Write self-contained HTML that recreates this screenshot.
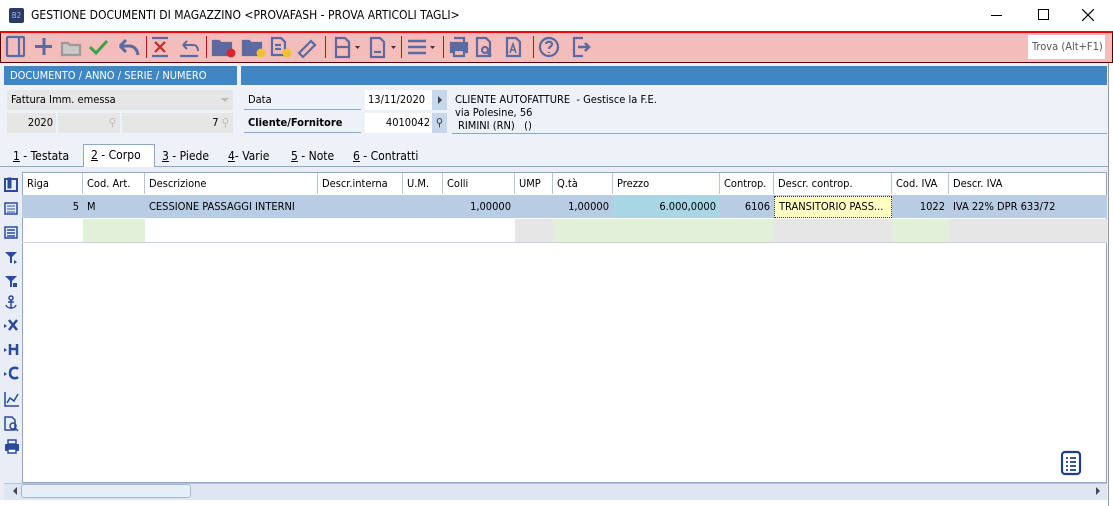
<!DOCTYPE html>
<html><head><meta charset="utf-8"><style>
*{margin:0;padding:0;box-sizing:border-box}
body{width:1113px;height:506px;overflow:hidden;background:#fff;font-family:Tahoma,"DejaVu Sans Condensed","Liberation Sans",sans-serif;font-size:11px;color:#000;position:relative}
.a{position:absolute}
.t{font-family:"DejaVu Sans Condensed","Liberation Sans",sans-serif;font-size:11px;white-space:nowrap}
.ico{position:absolute;top:35px}
.sep{position:absolute;top:36px;width:1px;height:22px;background:#b01818}
.cell{position:absolute;border-right:1px solid #b7c3d6;padding:0 4px;line-height:21px;overflow:hidden;white-space:nowrap}
</style></head><body>
<!-- title bar -->
<div class="a" style="left:9px;top:8px;width:15px;height:15px;background:#2c3a66;border-radius:2px;color:#9fb4e8;font-size:8px;line-height:15px;text-align:center">B2</div>
<div class="a t" style="left:31px;top:8px;font-size:12px">GESTIONE DOCUMENTI DI MAGAZZINO &lt;PROVAFASH - PROVA ARTICOLI TAGLI&gt;</div>
<div class="a" style="left:991px;top:15px;width:11px;height:1px;background:#000"></div>
<div class="a" style="left:1038px;top:9px;width:11px;height:11px;border:1px solid #000"></div>
<svg class="a" style="left:1082px;top:9px" width="12" height="12"><path d="M0 0L12 12M12 0L0 12" stroke="#000" stroke-width="1.2"/></svg>
<!-- toolbar -->
<div class="a" style="left:0;top:31px;width:1113px;height:32px;background:#f4bcba;border-top:2px solid #f00;border-bottom:1px solid #5a0000;border-left:1px solid #5a0000;border-right:1px solid #5a0000"></div>
<div class="a t" style="left:1028px;top:35px;width:77px;height:24px;background:#fff;color:#555;line-height:24px;padding-left:4px;font-size:11px">Trova (Alt+F1)</div>
<svg class="a" style="left:0;top:33px" width="620" height="28" fill="none" stroke="#5b6aa0" stroke-width="2.2">
<rect x="7" y="4" width="17" height="19" rx="1"/><line x1="19" y1="4" x2="19" y2="23"/>
<path d="M44 5v17M35 13.5h17" stroke-width="3"/>
<path d="M62 10h6l2 2h10v10H62z" stroke="#9a9a9a" fill="#c9c9c9"/>
<path d="M90 14l6 6 11-12" stroke="#3fa14a" stroke-width="3"/>
<path d="M120 13l6-6M120 13l6 6M121 13h8c5 0 8 3 9 9" stroke-width="3"/>
<path d="M155 9l10 10M165 9l-10 10" stroke="#c02a2a"/><line x1="152" y1="5" x2="168" y2="5"/><line x1="152" y1="23" x2="168" y2="23"/>
<path d="M183 12l4-4M183 12l4 4M184 12h9c3 0 5 2 5 6" stroke-width="2"/><line x1="180" y1="23" x2="198" y2="23"/>
<path d="M213 8h6l2 2h10v12H213z" fill="#5b6aa0"/><circle cx="231" cy="20" r="4.5" fill="#d9262b" stroke="none"/>
<path d="M243 8h6l2 2h10v12H243z" fill="#5b6aa0"/><circle cx="261" cy="20" r="4.5" fill="#f0c030" stroke="none"/>
<path d="M272 5h9l4 4v13h-13z"/><path d="M275 12h6M275 16h6"/><circle cx="287" cy="20" r="4.5" fill="#f0c030" stroke="none"/>
<path d="M299 20l12-12 4 4-12 12z"/>
<path d="M336 5h9l4 4v15h-13z"/><line x1="336" y1="14" x2="349" y2="14"/><path d="M355 13h5l-2.5 3z" fill="#333" stroke="none"/>
<path d="M371 5h9l4 4v15h-13z"/><line x1="374" y1="19" x2="381" y2="19"/><path d="M391 13h5l-2.5 3z" fill="#333" stroke="none"/>
<path d="M408 8h18M408 14h18M408 20h18" stroke-width="2.5"/><path d="M430 13h5l-2.5 3z" fill="#333" stroke="none"/>
<path d="M451 10h16v9h-16z" fill="#5b6aa0"/><path d="M454 5h10v5M454 17h10v6h-10z" fill="#f4bcba"/>
<path d="M477 5h9l4 4v14h-13z"/><circle cx="485" cy="17" r="3"/><path d="M487 19l4 4"/>
<path d="M507 5h9l4 4v14h-13z"/><path d="M510 20l3-9 3 9M510 17h6" stroke-width="1.5"/>
<circle cx="549" cy="14" r="9"/><path d="M546 11c0-3 6-3 6 0s-3 2-3 5M549 19v1"/>
<path d="M583 5h-9v18h9"/><path d="M578 14h10M585 10l4 4-4 4" stroke-width="2.6"/>
</svg>
<div class="sep" style="left:146px"></div><div class="sep" style="left:206px"></div><div class="sep" style="left:325px"></div><div class="sep" style="left:401px"></div><div class="sep" style="left:443px"></div><div class="sep" style="left:533px"></div>
<!-- form area -->
<div class="a" style="left:0;top:63px;width:1109px;height:103px;background:#edf1f8"></div>
<div class="a" style="left:0;top:166px;width:1109px;height:334px;background:#e8edf6"></div>
<div class="a" style="left:1108px;top:63px;width:1px;height:443px;background:#999"></div>
<div class="a t" style="left:4px;top:66px;width:233px;height:19px;background:#3f87c4;color:#fff;line-height:19px;padding-left:6px">DOCUMENTO / ANNO / SERIE / NUMERO</div>
<div class="a" style="left:241px;top:66px;width:866px;height:19px;background:#3f87c4"></div>
<div class="a t" style="left:7px;top:90px;width:226px;height:20px;background:#e6e6e6;line-height:20px;padding-left:4px">Fattura Imm. emessa</div>
<div class="a" style="left:221px;top:98px;border:4px solid transparent;border-top-color:#bbb"></div>
<div class="a t" style="left:7px;top:113px;width:49px;height:20px;background:#e6e6e6;line-height:20px;text-align:right;padding-right:3px">2020</div>
<div class="a t" style="left:58px;top:113px;width:62px;height:20px;background:#e6e6e6;line-height:20px;text-align:right;padding-right:4px;color:#bbb">⚲</div>
<div class="a t" style="left:122px;top:113px;width:111px;height:20px;background:#e6e6e6;line-height:20px;text-align:right;padding-right:4px">7 <span style="color:#bbb">⚲</span></div>
<div class="a t" style="left:244px;top:90px;width:117px;height:20px;line-height:20px;padding-left:4px;border-bottom:1px solid #8ea8cc">Data</div>
<div class="a t" style="left:365px;top:90px;width:67px;height:20px;background:#fff;line-height:20px;padding-left:3px">13/11/2020</div>
<div class="a" style="left:432px;top:90px;width:15px;height:20px;background:#c6d6ec"></div>
<div class="a" style="left:438px;top:96px;border:4px solid transparent;border-left-color:#445"></div>
<div class="a t" style="left:244px;top:113px;width:117px;height:20px;line-height:20px;padding-left:4px;font-weight:bold;border-bottom:1px solid #8ea8cc">Cliente/Fornitore</div>
<div class="a t" style="left:365px;top:113px;width:67px;height:20px;background:#fff;line-height:20px;text-align:right;padding-right:2px">4010042</div>
<div class="a t" style="left:432px;top:113px;width:15px;height:20px;background:#c6d6ec;line-height:20px;text-align:center;color:#334">⚲</div>
<div class="a t" style="left:455px;top:93px">CLIENTE AUTOFATTURE&nbsp; - Gestisce la F.E.</div>
<div class="a t" style="left:455px;top:106px">via Polesine, 56</div>
<div class="a t" style="left:458px;top:119px">RIMINI (RN)&nbsp;&nbsp; ()</div>
<div class="a" style="left:452px;top:133px;width:655px;height:1px;background:#8ea8cc"></div>
<!-- tabs -->
<div class="a" style="left:0;top:166px;width:1109px;height:1px;background:#8ea8cc"></div>
<div class="a" style="left:83px;top:144px;width:72px;height:23px;background:#fff;border:1px solid #8ea8cc;border-bottom:none"></div>
<div class="a t" style="left:13px;top:149px;font-size:12px"><u>1</u> - Testata</div>
<div class="a t" style="left:91px;top:148px;font-size:12px"><u>2</u> - Corpo</div>
<div class="a t" style="left:162px;top:149px;font-size:12px"><u>3</u> - Piede</div>
<div class="a t" style="left:228px;top:149px;font-size:12px"><u>4</u>- Varie</div>
<div class="a t" style="left:291px;top:149px;font-size:12px"><u>5</u> - Note</div>
<div class="a t" style="left:353px;top:149px;font-size:12px"><u>6</u> - Contratti</div>
<!-- grid -->
<div class="a" style="left:22px;top:172px;width:1085px;height:311px;background:#fff;border:1px solid #8ea8cc"></div>
<div class="a" style="left:22px;top:195px;width:1085px;height:1px;background:#b7c3d6"></div>
<div class="a" style="left:22px;top:195px;width:1085px;height:23px;background:#b8cce4"></div>
<div class="a" style="left:22px;top:242px;width:1085px;height:1px;background:#c8d2e2"></div>
<div style="position:absolute;left:23px;top:173px;height:21px">
<div class="cell" style="left:0;width:60px">Riga</div><div class="cell" style="left:60px;width:62px">Cod. Art.</div><div class="cell" style="left:122px;width:173px">Descrizione</div><div class="cell" style="left:295px;width:85px">Descr.interna</div><div class="cell" style="left:380px;width:40px">U.M.</div><div class="cell" style="left:420px;width:72px">Colli</div><div class="cell" style="left:492px;width:38px">UMP</div><div class="cell" style="left:530px;width:60px">Q.tà</div><div class="cell" style="left:590px;width:107px">Prezzo</div><div class="cell" style="left:697px;width:54px">Controp.</div><div class="cell" style="left:751px;width:118px">Descr. controp.</div><div class="cell" style="left:869px;width:57px">Cod. IVA</div><div class="cell" style="left:926px;width:158px;border:none">Descr. IVA</div>
</div>
<div style="position:absolute;left:23px;top:196px;height:22px" class="t">
<div class="cell" style="left:0;width:60px;text-align:right;border:none">5</div><div class="cell" style="left:60px;width:62px;border:none">M</div><div class="cell" style="left:122px;width:173px;border:none">CESSIONE PASSAGGI INTERNI</div><div class="cell" style="left:420px;width:72px;text-align:right;border:none">1,00000</div><div class="cell" style="left:530px;width:60px;text-align:right;border:none">1,00000</div><div class="cell" style="left:590px;width:107px;text-align:right;background:#a9d6e4;border:none">6.000,0000</div><div class="cell" style="left:697px;width:54px;text-align:right;border:none">6106</div><div class="cell" style="left:751px;width:118px;background:#ffffc4;border:1px dotted #333;line-height:20px">TRANSITORIO PASS...</div><div class="cell" style="left:869px;width:57px;text-align:right;border:none">1022</div><div class="cell" style="left:926px;width:158px;border:none">IVA 22% DPR 633/72</div>
</div>
<div style="position:absolute;left:23px;top:219px;height:23px">
<div class="a" style="left:60px;width:62px;height:23px;background:#e2f0da"></div><div class="a" style="left:492px;width:38px;height:23px;background:#e6e6e6"></div><div class="a" style="left:530px;width:221px;height:23px;background:#e2f0da"></div><div class="a" style="left:751px;width:118px;height:23px;background:#e6e6e6"></div><div class="a" style="left:869px;width:57px;height:23px;background:#e2f0da"></div><div class="a" style="left:926px;width:158px;height:23px;background:#e6e6e6"></div>
</div>
<!-- left icon column -->
<svg class="a" style="left:3px;top:176px" width="18" height="282" fill="#2a4a9a" stroke="#2a4a9a">
<rect x="2" y="3" width="12" height="12" fill="none" stroke-width="2"/><rect x="5" y="2" width="3" height="10"/>
<rect x="2" y="27" width="12" height="11" fill="none" stroke-width="1.5"/><path d="M4 30h8M4 33h8M4 36h8" stroke-width="1"/>
<rect x="2" y="51" width="12" height="11" fill="none" stroke-width="1.5"/><path d="M4 54h8M4 57h8M4 60h8" stroke-width="1.5"/>
<path d="M2 76h12l-5 5v6h-2v-6z" stroke="none"/><path d="M11 84l3 2-3 2z" stroke="none"/>
<path d="M2 100h12l-5 5v6h-2v-6z" stroke="none"/><rect x="10" y="107" width="4" height="4" stroke="none"/>
<circle cx="8" cy="122" r="2" fill="none" stroke-width="1.5"/><path d="M8 124v9M3 129c1 4 9 4 10 0M5 126h6" fill="none" stroke-width="1.5"/>
<path d="M1 148l3 2-3 2z" stroke="none"/><path d="M6 144l8 10M14 144l-8 10" stroke-width="2.5" fill="none"/>
<path d="M1 172l3 2-3 2z" stroke="none"/><path d="M7 168v11M14 168v11M7 173h7" stroke-width="2.5" fill="none"/>
<path d="M1 196l3 2-3 2z" stroke="none"/><path d="M15 193c-2-2-8-2-8 4s6 6 8 4" stroke-width="2.5" fill="none"/>
<path d="M2 216v14h14M4 227l3-5 4 3 4-7" stroke-width="1.5" fill="none"/>
<path d="M2 241h7l3 3v10H2z" fill="none" stroke-width="1.5"/><circle cx="10" cy="250" r="3" fill="none" stroke-width="1.5"/><path d="M12 252l3 3" stroke-width="1.5"/>
<rect x="2" y="268" width="14" height="7" rx="1" stroke="none"/><rect x="5" y="264" width="8" height="4" fill="none" stroke-width="1.5"/><rect x="5" y="273" width="8" height="4" fill="#fff" stroke-width="1.5"/>
</svg>
<!-- bottom-right icon -->
<svg class="a" style="left:1060px;top:450px" width="22" height="26" fill="none" stroke="#1b3f8a" stroke-width="2.2"><rect x="2" y="2" width="18" height="22" rx="3"/><path d="M6 8h2M10 8h6M6 12h2M10 12h6M6 16h2M10 16h6M6 20h2M10 20h6" stroke-width="1.8"/></svg>
<!-- scrollbar -->
<div class="a" style="left:4px;top:483px;width:1103px;height:17px;background:#dde6f1;border-top:1px solid #b7c3d6"></div>
<div class="a" style="left:9px;top:487px;border:4px solid transparent;border-right-color:#445"></div>
<div class="a" style="left:21px;top:484px;width:170px;height:14px;background:#e6eef8;border:1px solid #a8b8d0;border-radius:3px"></div>
<div class="a" style="left:1096px;top:487px;border:4px solid transparent;border-left-color:#445"></div>
</body></html>
